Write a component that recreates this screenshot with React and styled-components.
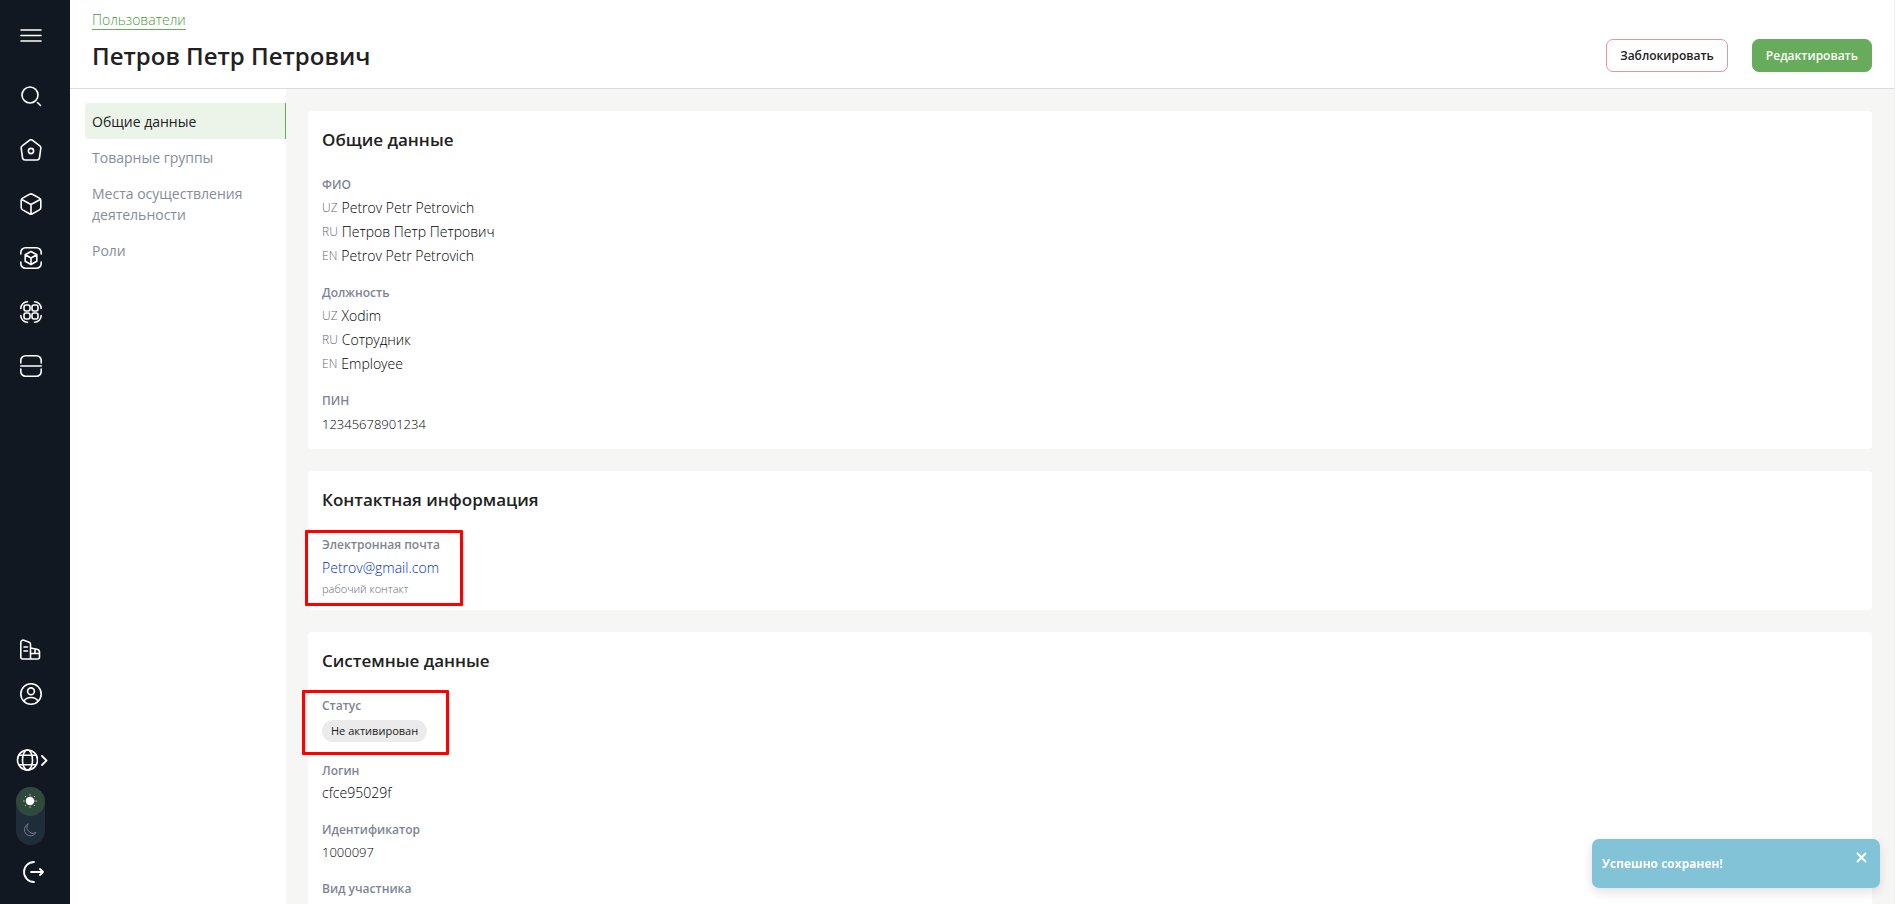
import React from "react";
import styled, { createGlobalStyle, css } from "styled-components";

const GlobalStyle = createGlobalStyle`
    *, *::before, *::after {
        box-sizing: border-box;
    }
    body {
        margin: 0;
        background: #fff;
        color: #212121;
        font-family: "Open Sans", "Noto Sans", sans-serif;
        font-size: 14px;
    }
    button {
        font-family: inherit;
        cursor: pointer;
    }
`;

const Layout = styled.div`
    display: flex;
    height: 100vh;
    overflow: hidden;
`;

const Sidebar = styled.aside`
    display: flex;
    flex-direction: column;
    justify-content: space-between;
    flex: 0 0 70px;
    padding: 25px 0 21px;
    background: #121822;
`;

const SideGroup = styled.nav`
    display: flex;
    flex-direction: column;
    align-items: flex-start;
    gap: ${props => props.$gap}px;
    padding-left: 16px;
`;

const IconButton = styled.button`
    display: flex;
    align-items: center;
    justify-content: center;
    min-width: 29px;
    height: 22px;
    padding: 0;
    border: 0;
    background: none;
    color: #fff;
    margin-bottom: ${props => props.$after || 0}px;
    svg {
        display: block;
        flex: none;
        fill: none;
        stroke: currentColor;
        stroke-linecap: round;
        stroke-linejoin: round;
    }
`;

const ThemeSwitch = styled.div`
    display: flex;
    flex-direction: column;
    width: 29px;
    border-radius: 15px;
    background: #1f2d3a;
`;

const ThemeOption = styled(IconButton)`
    width: 29px;
    height: 29px;
    border-radius: 50%;
    background: ${props => (props.$active ? "#2f4a3d" : "none")};
    color: ${props => (props.$active ? "#fff" : "#6f7a86")};
`;

const Main = styled.div`
    display: flex;
    flex-direction: column;
    flex: 1;
    min-width: 0;
    border-right: 1px solid #f0f0f0;
`;

const Header = styled.header`
    display: flex;
    flex: none;
    align-items: flex-end;
    justify-content: space-between;
    height: 89px;
    padding: 0 22px 16px;
    border-bottom: 1px solid #dcdcde;
`;

const Heading = styled.div`
    display: flex;
    flex-direction: column;
    align-items: flex-start;
    gap: 10px;
`;

const Breadcrumb = styled.a`
    border-bottom: 1px solid #67ac5b;
    color: #479b38;
    font-weight: 300;
    line-height: 18px;
    text-decoration: none;
`;

const Title = styled.h1`
    margin: 0;
    font-size: 24px;
    font-weight: 600;
    line-height: 32px;
`;

const Actions = styled.div`
    display: flex;
    gap: 24px;
`;

const Button = styled.button`
    height: 33px;
    padding: 0 13px;
    border: 1px solid ${props => (props.$primary ? "#67ac5b" : "#ea9494")};
    border-radius: 7px;
    background: ${props => (props.$primary ? "#67ac5b" : "#fff")};
    color: ${props => (props.$primary ? "#fff" : "#212121")};
    font-size: 12px;
    font-weight: 600;
`;

const Body = styled.div`
    display: flex;
    flex: 1;
    min-height: 0;
`;

const Menu = styled.nav`
    flex: 0 0 216px;
    padding: 14px 0 0 15px;
`;

const MenuLink = styled.a`
    display: block;
    padding: 8px 24px 7px 7px;
    border-right: 1px solid ${props => (props.$active ? "#67ac5b" : "#fff")};
    border-radius: 4px 0 0 4px;
    background: ${props => (props.$active ? "#ecf4ea" : "none")};
    color: ${props => (props.$active ? "#212121" : "#858d9c")};
    line-height: 21px;
    text-decoration: none;
`;

const Content = styled.main`
    display: flex;
    flex-direction: column;
    flex: 1;
    gap: 22px;
    padding: 22px;
    overflow: hidden;
    background: #f6f6f4;
`;

const Card = styled.section`
    flex: none;
    padding: 16px 14px 13px;
    border-radius: 4px;
    background: #fff;
`;

const CardTitle = styled.h2`
    margin: 0 0 22px;
    font-size: 17px;
    font-weight: 600;
    line-height: 25px;
`;

const Fields = styled.dl`
    display: flex;
    flex-direction: column;
    gap: ${props => props.$gap}px;
    margin: 0;
`;

const Field = styled.div`
    position: relative;
    ${props =>
        props.$mark &&
        css`
            &::after {
                content: "";
                position: absolute;
                top: ${props.$mark.top}px;
                left: ${props.$mark.left}px;
                width: ${props.$mark.width}px;
                height: ${props.$mark.height}px;
                border: 3px solid #fe0000;
                border-radius: 1px;
                pointer-events: none;
            }
        `}
`;

const Label = styled.dt`
    color: #7d8595;
    font-size: 12px;
    font-weight: 600;
    line-height: 22px;
`;

const Value = styled.dd`
    display: flex;
    gap: 4px;
    margin: 0;
    color: #000;
    font-size: ${props => (props.$numeric ? 13 : 14)}px;
    font-weight: 300;
    line-height: ${props => (props.$tight ? 22 : 24)}px;
`;

const Lang = styled.span`
    color: #5f687a;
    font-size: 12px;
`;

const MailLink = styled.a`
    color: #0030c0;
    text-decoration: none;
`;

const Note = styled.dd`
    margin: 0;
    color: #5f687a;
    font-size: 11px;
    font-weight: 300;
    line-height: 17px;
`;

const Badge = styled.span`
    margin: 3px 0;
    padding: 0 9px;
    border-radius: 11px;
    background: #ebebeb;
    color: #212121;
    font-size: 11px;
    font-weight: 400;
    line-height: 22px;
`;

const Toast = styled.div`
    position: fixed;
    right: 15px;
    bottom: 16px;
    display: flex;
    align-items: center;
    justify-content: space-between;
    width: 288px;
    height: 49px;
    padding: 0 10px;
    border-radius: 7px;
    background: #82c3d7;
    box-shadow: 0 4px 12px rgba(0, 0, 0, 0.12);
    color: #fff;
    font-size: 12px;
    font-weight: 700;
`;

const CloseButton = styled(IconButton)`
    align-self: flex-start;
    min-width: 17px;
    height: 36px;
`;

const Icon = ({ size = 22, width = 1.6, children }) => (
    <svg
        width={size}
        height={size}
        viewBox={`0 0 ${size} ${size}`}
        strokeWidth={width}
        aria-hidden="true"
    >
        {children}
    </svg>
);

const corners = (
    <path d="M.8 7V5.5A4.7 4.7 0 0 1 5.5.8h11a4.7 4.7 0 0 1 4.7 4.7V7M.8 15v1.5a4.7 4.7 0 0 0 4.7 4.7h11a4.7 4.7 0 0 0 4.7-4.7V15" />
);

const topIcons = [
    { name: "Меню", icon: <path d="M1 5h20M1 10.5h20M1 16h20" />, after: 6 },
    {
        name: "Поиск",
        icon: (
            <>
                <circle cx="10" cy="10" r="8" />
                <path d="M17.5 17.5l3 3" />
            </>
        )
    },
    {
        name: "Главная",
        icon: (
            <>
                <path d="M9.4 1.3a2.6 2.6 0 0 1 3.2 0l7.2 5.6a2.6 2.6 0 0 1 1 2.5l-1.3 9.3a2.6 2.6 0 0 1-2.6 2.3H5.1a2.6 2.6 0 0 1-2.6-2.3L1.2 9.4a2.6 2.6 0 0 1 1-2.5z" />
                <circle cx="11" cy="12" r="2.6" />
            </>
        )
    },
    {
        name: "Товары",
        icon: (
            <path d="M9.6 1.3a2.8 2.8 0 0 1 2.8 0l7 3.8a2.8 2.8 0 0 1 1.4 2.4v7a2.8 2.8 0 0 1-1.4 2.4l-7 3.8a2.8 2.8 0 0 1-2.8 0l-7-3.8a2.8 2.8 0 0 1-1.4-2.4v-7a2.8 2.8 0 0 1 1.4-2.4zM1.8 6.5L11 11.5l9.2-5M11 11.5V21" />
        )
    },
    {
        name: "Коды",
        icon: (
            <>
                {corners}
                <path d="M11 4.5l5.8 3.2v6.6L11 17.5l-5.8-3.2V7.7zM5.2 7.7L11 11l5.8-3.3M11 11v6.5" />
            </>
        )
    },
    {
        name: "Агрегация",
        icon: (
            <>
                <path d="M.8 7.5A6.7 6.7 0 0 1 7.5.8M14.5.8a6.7 6.7 0 0 1 6.7 6.7M21.2 14.5a6.7 6.7 0 0 1-6.7 6.7M7.5 21.2a6.7 6.7 0 0 1-6.7-6.7" />
                <rect x="4" y="4" width="6" height="6" rx="2" />
                <rect x="12" y="4" width="6" height="6" rx="2" />
                <rect x="4" y="12" width="6" height="6" rx="2" />
                <rect x="12" y="12" width="6" height="6" rx="2" />
            </>
        )
    },
    {
        name: "Сканер",
        icon: (
            <>
                <path d="M.8 8V5.5A4.7 4.7 0 0 1 5.5.8h11a4.7 4.7 0 0 1 4.7 4.7V8M.8 14v2.5a4.7 4.7 0 0 0 4.7 4.7h11a4.7 4.7 0 0 0 4.7-4.7V14" />
                <path d="M.8 11h20.4" />
            </>
        )
    }
];

const people = [
    { lang: "UZ", text: "Petrov Petr Petrovich" },
    { lang: "RU", text: "Петров Петр Петрович" },
    { lang: "EN", text: "Petrov Petr Petrovich" }
];

const positions = [
    { lang: "UZ", text: "Xodim" },
    { lang: "RU", text: "Сотрудник" },
    { lang: "EN", text: "Employee" }
];

const menu = [
    "Общие данные",
    "Товарные группы",
    "Места осуществления деятельности",
    "Роли"
];

const Translations = ({ label, items }) => (
    <Field>
        <Label>{label}</Label>
        {items.map(item => (
            <Value key={item.lang}>
                <Lang>{item.lang}</Lang>
                {item.text}
            </Value>
        ))}
    </Field>
);

const SideNav = () => (
    <Sidebar>
        <SideGroup $gap={32} aria-label="Разделы">
            {topIcons.map(item => (
                <IconButton
                    key={item.name}
                    aria-label={item.name}
                    $after={item.after}
                >
                    <Icon>{item.icon}</Icon>
                </IconButton>
            ))}
        </SideGroup>
        <SideGroup $gap={16} aria-label="Профиль">
            <IconButton aria-label="Организация" $after={6}>
                <Icon>
                    <path d="M.8 3.5a2.3 2.3 0 0 1 3-2.2l5.4 2A2 2 0 0 1 10.5 5.2V20H2.8a2 2 0 0 1-2-2zM10.5 9l6.5 1.2a3 3 0 0 1 2.5 3V18a2 2 0 0 1-2 2h-7M4 8h3.5M4 12h3.5M10.5 14.5h9M15 10v4.5" />
                </Icon>
            </IconButton>
            <IconButton aria-label="Профиль" $after={28}>
                <Icon>
                    <circle cx="11" cy="11" r="10.2" />
                    <circle cx="11" cy="8.3" r="3.4" />
                    <path d="M4 18c1.5-2.4 4-3.5 7-3.5s5.5 1.1 7 3.5" />
                </Icon>
            </IconButton>
            <IconButton aria-label="Язык">
                <Icon>
                    <circle cx="11.5" cy="11" r="10" />
                    <ellipse cx="11.5" cy="11" rx="5" ry="10" />
                    <path d="M3 6.2h17M3 15.8h17" />
                </Icon>
                <Icon size={11} width={1.8}>
                    <path d="M4 1l4.5 4.5L4 10" />
                </Icon>
            </IconButton>
            <ThemeSwitch>
                <ThemeOption $active aria-label="Светлая тема">
                    <Icon size={15} width={1}>
                        <circle cx="7" cy="7" r="3.8" fill="#fff" />
                        <path d="M7 .8v.2M7 13v.2M.8 7H1M13 7h.2M2.6 2.6l.1.1M11.3 11.3l.1.1M2.6 11.4l.1-.1M11.3 2.7l.1-.1" />
                    </Icon>
                </ThemeOption>
                <ThemeOption aria-label="Тёмная тема">
                    <Icon size={15} width={1}>
                        <path d="M5 1A6.2 6.2 0 1 0 13 9.5 6 6 0 0 1 5 1z" />
                    </Icon>
                </ThemeOption>
            </ThemeSwitch>
            <IconButton aria-label="Выйти">
                <Icon size={26} width={1.8}>
                    <path d="M16 3A10 10 0 0 0 16 23M13 13h12M22 10l3 3-3 3" />
                </Icon>
            </IconButton>
        </SideGroup>
    </Sidebar>
);

const App = () => (
    <Layout>
        <GlobalStyle />
        <SideNav />
        <Main>
            <Header>
                <Heading>
                    <Breadcrumb href="#users">Пользователи</Breadcrumb>
                    <Title>Петров Петр Петрович</Title>
                </Heading>
                <Actions>
                    <Button>Заблокировать</Button>
                    <Button $primary>Редактировать</Button>
                </Actions>
            </Header>
            <Body>
                <Menu aria-label="Разделы карточки">
                    {menu.map((item, index) => (
                        <MenuLink key={item} href="#" $active={index === 0}>
                            {item}
                        </MenuLink>
                    ))}
                </Menu>
                <Content>
                    <Card>
                        <CardTitle>Общие данные</CardTitle>
                        <Fields $gap={14}>
                            <Translations label="ФИО" items={people} />
                            <Translations label="Должность" items={positions} />
                            <Field>
                                <Label>ПИН</Label>
                                <Value $numeric>12345678901234</Value>
                            </Field>
                        </Fields>
                    </Card>
                    <Card>
                        <CardTitle>Контактная информация</CardTitle>
                        <Fields $gap={14}>
                            <Field
                                $mark={{
                                    top: -4,
                                    left: -17,
                                    width: 158,
                                    height: 76
                                }}
                            >
                                <Label>Электронная почта</Label>
                                <Value>
                                    <MailLink href="mailto:Petrov@gmail.com">
                                        Petrov@gmail.com
                                    </MailLink>
                                </Value>
                                <Note>рабочий контакт</Note>
                            </Field>
                        </Fields>
                    </Card>
                    <Card>
                        <CardTitle>Системные данные</CardTitle>
                        <Fields $gap={15}>
                            <Field
                                $mark={{
                                    top: -5,
                                    left: -20,
                                    width: 147,
                                    height: 65
                                }}
                            >
                                <Label>Статус</Label>
                                <Value>
                                    <Badge>Не активирован</Badge>
                                </Value>
                            </Field>
                            <Field>
                                <Label>Логин</Label>
                                <Value $tight>cfce95029f</Value>
                            </Field>
                            <Field>
                                <Label>Идентификатор</Label>
                                <Value $tight $numeric>
                                    1000097
                                </Value>
                            </Field>
                            <Field>
                                <Label>Вид участника</Label>
                            </Field>
                        </Fields>
                    </Card>
                </Content>
            </Body>
        </Main>
        <Toast role="status">
            Успешно сохранен!
            <CloseButton aria-label="Закрыть">
                <Icon size={11} width={1.8}>
                    <path d="M1.5 1.5l8 8M9.5 1.5l-8 8" />
                </Icon>
            </CloseButton>
        </Toast>
    </Layout>
);

export default App;
